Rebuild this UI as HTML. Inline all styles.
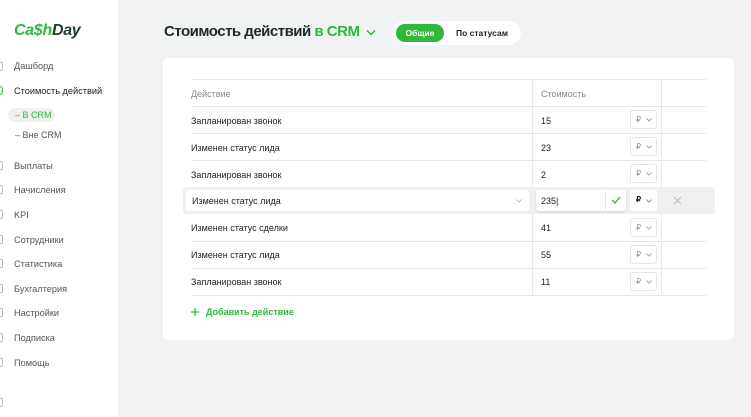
<!DOCTYPE html><html><head><meta charset="utf-8"><style>
*{margin:0;padding:0;box-sizing:border-box}
body{width:751px;height:417px;overflow:hidden;background:#f0f2f3;font-family:"Liberation Sans",sans-serif;position:relative;color:#222}
.sb{position:absolute;left:0;top:0;width:118px;height:417px;background:#fff}
.logo{position:absolute;left:14px;top:22px;font-size:16px;font-weight:bold;font-style:italic;color:#2fb83a;letter-spacing:-0.3px}
.logo span{color:#1e3a2a}
.it{position:absolute;left:14px;font-size:9.2px;color:#555}
.ic{position:absolute;left:-4px;width:7px;height:9px;border:1px solid #bbb;border-radius:2px}
.t{position:absolute;font-size:9px}
h1{position:absolute;left:164px;top:23px;font-size:15px;letter-spacing:-0.5px;font-weight:bold;color:#1f2a28;white-space:nowrap}
h1 b{color:#2fb83a}
.tabs{position:absolute;left:393px;top:21px;width:128px;height:24px;background:#fff;border-radius:12px}
.tab1{position:absolute;left:3px;top:3px;width:48px;height:18px;background:#2fb83a;border-radius:9px;color:#fff;font-size:8.5px;font-weight:bold;text-align:center;line-height:18px}
.tab2{position:absolute;left:63px;top:3px;font-size:8.5px;line-height:18px;font-weight:bold;color:#222}
.card{position:absolute;left:163px;top:58px;width:571px;height:282px;background:#fff;border-radius:6px}
.hl{position:absolute;left:191px;width:515px;height:1px;background:#e6e8e9}
.vl{position:absolute;top:79px;height:216px;width:1px;background:#e6e8e9}
.cur{position:absolute;left:630px;width:27px;height:19px;border:1px solid #e3e5e6;border-radius:3px;font-size:8px;color:#999;padding:4px 0 0 5px}
.cur svg{position:absolute;left:15px;top:7px}
</style></head><body>
<div class="sb">
<div class="logo">Ca$h<span>Day</span></div>
<div class="ic" style="top:62px"></div><div class="it" style="top:61px">Дашборд</div>
<div class="ic" style="top:86px;border-color:#2fb83a;border-radius:5px"></div><div class="it" style="top:86px;color:#222">Стоимость действий</div>
<div style="position:absolute;left:8px;top:108px;width:47px;height:14px;background:#eef0f1;border-radius:7px"></div>
<div class="it" style="top:110px;left:15px;color:#2fb83a;font-size:9px">– В CRM</div>
<div class="it" style="top:130px;left:15px;font-size:9px">– Вне CRM</div>
<div class="ic" style="top:161px"></div><div class="it" style="top:161px">Выплаты</div>
<div class="ic" style="top:185px"></div><div class="it" style="top:185px">Начисления</div>
<div class="ic" style="top:210px"></div><div class="it" style="top:210px">KPI</div>
<div class="ic" style="top:235px"></div><div class="it" style="top:235px">Сотрудники</div>
<div class="ic" style="top:259px"></div><div class="it" style="top:259px">Статистика</div>
<div class="ic" style="top:284px"></div><div class="it" style="top:284px">Бухгалтерия</div>
<div class="ic" style="top:308px"></div><div class="it" style="top:308px">Настройки</div>
<div class="ic" style="top:333px"></div><div class="it" style="top:333px">Подписка</div>
<div class="ic" style="top:358px"></div><div class="it" style="top:358px">Помощь</div>
<div class="ic" style="top:398px"></div>
</div>
<h1>Стоимость действий <b>в CRM</b></h1>
<svg style="position:absolute;left:366px;top:29px" width="10" height="7" viewBox="0 0 10 7"><path d="M1 1.5L5 5.5L9 1.5" fill="none" stroke="#2fb83a" stroke-width="1.5"/></svg>
<div class="tabs"><div class="tab1">Общие</div><div class="tab2">По статусам</div></div>
<div class="card"></div>
<div class="hl" style="top:79px"></div><div class="hl" style="top:106px"></div><div class="hl" style="top:133px"></div><div class="hl" style="top:160px"></div><div class="hl" style="top:241px"></div><div class="hl" style="top:268px"></div><div class="hl" style="top:295px"></div>
<div class="vl" style="left:532px"></div><div class="vl" style="left:661px"></div>
<div class="t" style="left:191px;top:89px;color:#888">Действие</div>
<div class="t" style="left:541px;top:89px;color:#888">Стоимость</div>
<div class="t" style="left:191px;top:116px">Запланирован звонок</div><div class="t" style="left:541px;top:116px">15</div><div class="cur" style="top:110px">₽<svg width="6" height="4"><path d="M.5.5L3 3L5.5.5" fill="none" stroke="#aaa"/></svg></div>
<div class="t" style="left:191px;top:143px">Изменен статус лида</div><div class="t" style="left:541px;top:143px">23</div><div class="cur" style="top:137px">₽<svg width="6" height="4"><path d="M.5.5L3 3L5.5.5" fill="none" stroke="#aaa"/></svg></div>
<div class="t" style="left:191px;top:170px">Запланирован звонок</div><div class="t" style="left:541px;top:170px">2</div><div class="cur" style="top:164px">₽<svg width="6" height="4"><path d="M.5.5L3 3L5.5.5" fill="none" stroke="#aaa"/></svg></div>
<div style="position:absolute;left:183px;top:187px;width:532px;height:27px;background:#eef0f1;border-radius:3px"></div>
<div style="position:absolute;left:186px;top:190px;width:343px;height:21px;background:#fff;border-radius:3px"></div>
<div class="t" style="left:192px;top:196px">Изменен статус лида</div>
<svg style="position:absolute;left:516px;top:199px" width="6" height="4"><path d="M.5.5L3 3L5.5.5" fill="none" stroke="#bbb"/></svg>
<div style="position:absolute;left:536px;top:190px;width:90px;height:21px;background:#fff;border-radius:3px;box-shadow:0 1px 2px rgba(0,0,0,.12)"></div>
<div style="position:absolute;left:605px;top:191px;width:1px;height:19px;background:#e6e8e9"></div>
<div class="t" style="left:541px;top:196px">235|</div>
<svg style="position:absolute;left:611px;top:196px" width="10" height="8"><path d="M1 4L4 7L9 1" fill="none" stroke="#2fb83a" stroke-width="1.3"/></svg>
<div style="position:absolute;left:630px;top:190px;width:27px;height:21px;background:#fff;border-radius:3px;font-size:8px;padding:5px 0 0 6px;font-weight:bold">₽<svg style="position:absolute;left:16px;top:9px" width="6" height="4"><path d="M.5.5L3 3L5.5.5" fill="none" stroke="#999"/></svg></div>
<svg style="position:absolute;left:673px;top:196px" width="9" height="9"><path d="M1 1L8 8M8 1L1 8" stroke="#bbb" stroke-width="1"/></svg>
<div class="t" style="left:191px;top:223px">Изменен статус сделки</div><div class="t" style="left:541px;top:223px">41</div><div class="cur" style="top:218px">₽<svg width="6" height="4"><path d="M.5.5L3 3L5.5.5" fill="none" stroke="#aaa"/></svg></div>
<div class="t" style="left:191px;top:250px">Изменен статус лида</div><div class="t" style="left:541px;top:250px">55</div><div class="cur" style="top:245px">₽<svg width="6" height="4"><path d="M.5.5L3 3L5.5.5" fill="none" stroke="#aaa"/></svg></div>
<div class="t" style="left:191px;top:277px">Запланирован звонок</div><div class="t" style="left:541px;top:277px">11</div><div class="cur" style="top:272px">₽<svg width="6" height="4"><path d="M.5.5L3 3L5.5.5" fill="none" stroke="#aaa"/></svg></div>
<svg style="position:absolute;left:191px;top:308px" width="8" height="8"><path d="M4 0V8M0 4H8" stroke="#2fb83a" stroke-width="1.3"/></svg>
<div class="t" style="left:206px;top:307px;color:#2fb83a;font-weight:bold">Добавить действие</div>
</body></html>
